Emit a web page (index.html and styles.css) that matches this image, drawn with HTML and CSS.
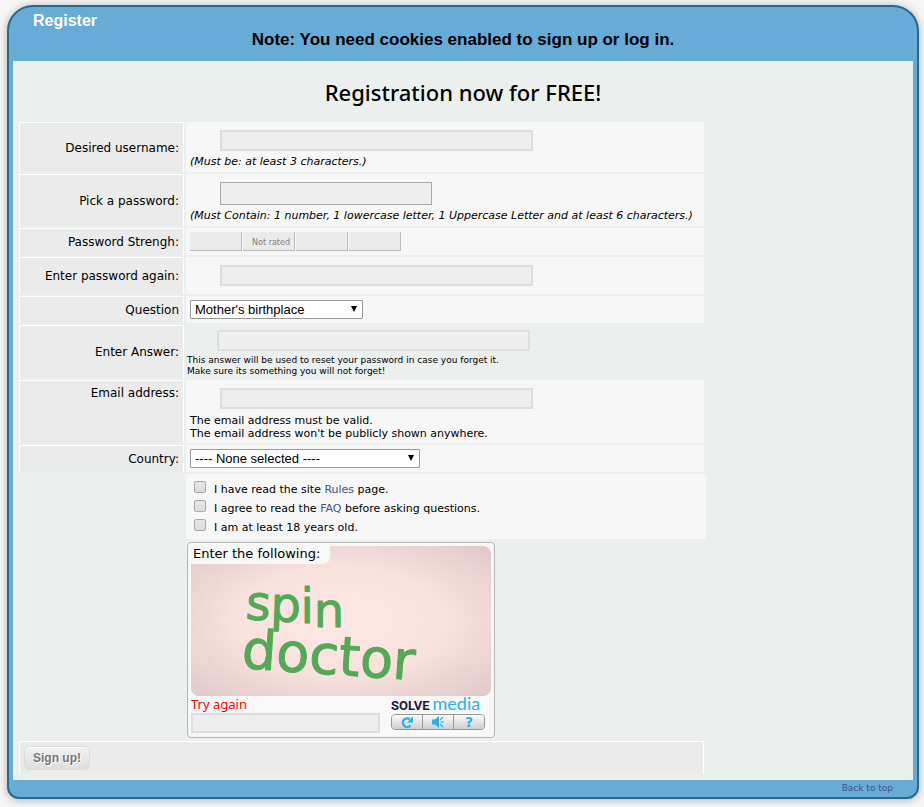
FILE: index.html
```html
<!DOCTYPE html>
<html lang="en">
<head>
    <meta charset="UTF-8">
    <meta name="viewport" content="width=device-width, initial-scale=1.0">
    <title>Register</title>
    <link rel="stylesheet" href="styles.css">
</head>
<body>

    <div class="panel" id="top">
        <header class="panel-head">
            <h1>Register</h1>
            <p class="cookie-note">Note: You need cookies enabled to sign up or log in.</p>
        </header>

        <main class="content">
            <h2>Registration now for FREE!</h2>

            <form class="register-form">
                <label class="label" for="username">Desired username:</label>
                <div class="field tall">
                    <input class="text-input" type="text" id="username">
                    <p class="hint">(Must be: at least 3 characters.)</p>
                </div>

                <label class="label" for="password">Pick a password:</label>
                <div class="field tall">
                    <input class="text-input password" type="password" id="password">
                    <p class="hint">(Must Contain: 1 number, 1 lowercase letter, 1 Uppercase Letter and at least 6 characters.)</p>
                </div>

                <div class="label">Password Strengh:</div>
                <div class="field">
                    <div class="strength">
                        <span></span>
                        <span>Not rated</span>
                        <span></span>
                        <span></span>
                    </div>
                </div>

                <label class="label" for="passagain">Enter password again:</label>
                <div class="field again">
                    <input class="text-input" type="password" id="passagain">
                </div>

                <label class="label" for="question">Question</label>
                <div class="field">
                    <div class="select-box question">
                        <select id="question">
                            <option>Mother's birthplace</option>
                        </select>
                    </div>
                </div>

                <label class="label" for="answer">Enter Answer:</label>
                <div class="field answer">
                    <input class="text-input" type="text" id="answer">
                    <p class="small-hint">This answer will be used to reset your password in case you forget it.<br>Make sure its something you will not forget!</p>
                </div>

                <label class="label label-top" for="email">Email address:</label>
                <div class="field tall">
                    <input class="text-input" type="text" id="email">
                    <p class="email-hint">The email address must be valid.<br>The email address won't be publicly shown anywhere.</p>
                </div>

                <label class="label" for="country">Country:</label>
                <div class="field">
                    <div class="select-box country">
                        <select id="country">
                            <option>---- None selected ----</option>
                        </select>
                    </div>
                </div>

                <div class="terms">
                    <div class="term">
                        <input type="checkbox" id="rules">
                        <label for="rules">I have read the site <a href="#">Rules</a> page.</label>
                    </div>
                    <div class="term">
                        <input type="checkbox" id="faq">
                        <label for="faq">I agree to read the <a href="#">FAQ</a> before asking questions.</label>
                    </div>
                    <div class="term">
                        <input type="checkbox" id="age">
                        <label for="age">I am at least 18 years old.</label>
                    </div>
                </div>

                <div class="captcha">
                    <div class="puzzle">
                        <label class="puzzle-title" for="captcha">Enter the following:</label>
                        <svg class="puzzle-words" viewBox="0 0 300 150" width="300" height="150">
                            <text class="word word-one" x="54" y="73 75 77 81" rotate="4 2 0 0">spin</text>
                            <text class="word word-two" x="50" y="122" transform="rotate(4 50 122)">doctor</text>
                        </svg>
                    </div>
                    <div class="captcha-foot">
                        <div class="reply">
                            <p class="error">Try again</p>
                            <input class="captcha-input" type="text" id="captcha">
                        </div>
                        <div class="provider">
                            <p class="brand"><b>SOLVE</b><span>media</span></p>
                            <div class="tools">
                                <button type="button" aria-label="New puzzle">
                                    <svg viewBox="0 0 14 12" width="14" height="12"><path d="M10.500 9.500A4.300 4.300 0 1 1 9.800 3.300" fill="none" stroke="#29b1ea" stroke-width="2.400"/><path d="M13 .5v6H7z" fill="#29b1ea"/></svg>
                                </button>
                                <button type="button" aria-label="Audio puzzle">
                                    <svg viewBox="0 0 14 12" width="14" height="12"><path d="M1 3.500h3L8 0v12L4 8.500H1z" fill="#29b1ea"/><path d="M9 4l3-3M9.500 6H13M9 8l3 3" stroke="#29b1ea" stroke-width="1.200"/></svg>
                                </button>
                                <button type="button">?</button>
                            </div>
                        </div>
                    </div>
                </div>

                <div class="submit-row">
                    <button class="btn" type="submit">Sign up!</button>
                </div>
            </form>
        </main>

        <footer class="panel-foot">
            <a href="#top">Back to top</a>
        </footer>
    </div>

</body>
</html>
```

FILE: styles.css
```css
*,*::before,*::after {
    box-sizing: border-box;
    margin: 0;
    padding: 0;
}

body {
    background-color: #f6f6f6;
    color: #000;
    font-family: Verdana, "DejaVu Sans", sans-serif;
    font-size: 12px;
    padding: 5px 5px 8px 7px;
}

a {
    color: #405487;
    text-decoration: none;
}

/* Panel */
.panel {
    background-color: #67abd7;
    border: 2px solid #246b8e;
    border-radius: 26px 26px 12px 12px;
    box-shadow: 0 1px 8px rgba(0, 0, 0, 0.3);
    padding: 0 4px;
}

.panel-head {
    height: 54px;
    padding-top: 4px;
    font-family: Arial, "Liberation Sans", sans-serif;
    font-weight: bold;
}

.panel-head h1 {
    color: #fff;
    font-size: 16px;
    line-height: 19px;
    padding-left: 20px;
}

.cookie-note {
    font-size: 17px;
    line-height: 20px;
    text-align: center;
}

.content {
    background-color: #ebf0ee;
    padding: 15px 6px 6px;
}

.content h2 {
    font-family: "Trebuchet MS", "Noto Sans", sans-serif;
    font-size: 22px;
    font-weight: 500;
    line-height: 32px;
    margin-bottom: 14px;
    text-align: center;
}

/* Form rows */
.register-form {
    display: grid;
    grid-template-columns: 165px minmax(0, 1fr);
    gap: 2px;
    max-width: 687px;
}

.label {
    display: flex;
    align-items: center;
    justify-content: flex-end;
    background-color: #ebebeb;
    border: 1px solid #fff;
    border-bottom: none;
    padding-right: 4px;
}

.label-top {
    align-items: flex-start;
    padding-top: 5px;
}

.field {
    background-color: #f7f7f7;
    margin-right: 2px;
    padding: 4px;
}

.tall {
    padding: 8px 4px 3px;
}

.again {
    padding: 8px 4px;
}

.answer {
    background-color: transparent;
    padding: 5px 1px 1px;
}

.text-input {
    display: block;
    width: 313px;
    height: 21px;
    margin-left: 30px;
    background-color: #eee;
    border: 2px solid #dedede;
}

.password {
    width: 212px;
    height: 23px;
    border: 1px solid #a9a9a9;
}

.hint {
    font-size: 11px;
    font-style: italic;
    line-height: 15px;
    margin-top: 3px;
    white-space: nowrap;
}

.small-hint {
    font-size: 9px;
    line-height: 11px;
    margin-top: 4px;
}

.email-hint {
    font-size: 11px;
    line-height: 13px;
    margin-top: 5px;
}

.strength {
    display: grid;
    grid-template-columns: repeat(4, 52px);
    gap: 1px;
}

.strength span {
    height: 19px;
    background-color: #ebebeb;
    border: solid #bbb;
    border-width: 0 1px 1px 0;
    color: #808080;
    font-size: 8px;
    line-height: 21px;
    padding-right: 4px;
    text-align: right;
}

/* Drop-downs */
.select-box {
    position: relative;
    height: 19px;
}

.select-box::after {
    content: "";
    position: absolute;
    top: 6px;
    right: 6px;
    border: solid transparent;
    border-width: 6px 3px 0;
    border-top-color: #000;
    pointer-events: none;
}

.question {
    width: 173px;
}

.country {
    width: 230px;
}

select {
    display: block;
    width: 100%;
    height: 19px;
    appearance: none;
    background-color: #fff;
    border: 1px solid #999;
    border-radius: 1px;
    color: #000;
    font: 13px Arial, "Liberation Sans", sans-serif;
    padding-left: 4px;
}

/* Terms */
.terms {
    grid-column: 2;
    background-color: #f7f7f7;
    font-size: 11px;
    padding: 6px 8px 2px;
}

.term {
    display: flex;
    gap: 8px;
    line-height: 19px;
}

.term input {
    width: 12px;
    height: 12px;
    margin-top: 1px;
    appearance: none;
    background: linear-gradient(#e8e8e8, #dcdcdc);
    border: 1px solid #aaa;
    border-radius: 2px;
}

/* Captcha */
.captcha {
    grid-column: 2;
    width: 308px;
    background-color: #f8f8f8;
    border: 1px solid #b5b5b5;
    border-radius: 4px;
    margin: 1px 0 1px 1px;
    padding: 3px 3px 4px;
}

.puzzle {
    position: relative;
    height: 150px;
    background: radial-gradient(ellipse at center, #ffe8e5 0%, #f9e1de 50%, #dfc8c8 100%);
    border-radius: 8px;
}

.puzzle-title {
    position: absolute;
    top: 0;
    left: 0;
    background-color: #f8f8f8;
    border-bottom-right-radius: 7px;
    font-size: 13px;
    line-height: 15px;
    padding: 0 10px 3px 2px;
    white-space: nowrap;
}

.puzzle-words {
    display: block;
}

.word {
    fill: #53a955;
    stroke: #53a955;
    stroke-linejoin: round;
    stroke-width: 1px;
    font-family: "DejaVu Sans", sans-serif;
}

.word-one {
    font-size: 48px;
}

.word-two {
    font-size: 54px;
}

.captcha-foot {
    display: flex;
    gap: 11px;
}

.error {
    color: #f00;
    font-family: Tahoma, "Noto Sans", sans-serif;
    font-size: 13px;
    line-height: 17px;
}

.captcha-input {
    display: block;
    width: 189px;
    height: 20px;
    background-color: #eee;
    border: 2px solid #dedede;
}

.brand {
    display: flex;
    align-items: baseline;
    gap: 3px;
    height: 17px;
    color: #1e1a33;
    font-family: Roboto, sans-serif;
    font-size: 13px;
    line-height: 14px;
}

.brand span {
    color: #29b1ea;
    font-family: Lato, sans-serif;
    font-size: 18px;
}

.tools {
    display: flex;
    width: 94px;
    height: 16px;
    margin-top: 1px;
    border: 1px solid #999;
    border-radius: 4px;
    overflow: hidden;
}

.tools button {
    display: flex;
    flex: 1;
    align-items: center;
    justify-content: center;
    background: linear-gradient(#fafafa, #cfcfcf);
    border: none;
    border-left: 1px solid #999;
    color: #29b1ea;
    font: bold 14px "DejaVu Sans", sans-serif;
}

.tools button:first-child {
    border-left: none;
}

/* Submit */
.submit-row {
    grid-column: 1 / -1;
    background-color: #ebebeb;
    border: 1px solid #fff;
    border-bottom: none;
    margin-right: 2px;
    padding: 4px;
}

.btn {
    display: block;
    height: 24px;
    background: linear-gradient(#f1f1f1, #dedede);
    border: 1px solid #dcdcdc;
    border-radius: 5px;
    box-shadow: inset 0 1px 0 #fff;
    color: #777;
    cursor: pointer;
    font: bold 12px Arial, "Liberation Sans", sans-serif;
    padding: 0 8px;
    text-shadow: 1px 1px 0 #fff;
}

.panel-foot {
    height: 17px;
    font-size: 9px;
    line-height: 16px;
    padding-right: 20px;
    text-align: right;
}
```
